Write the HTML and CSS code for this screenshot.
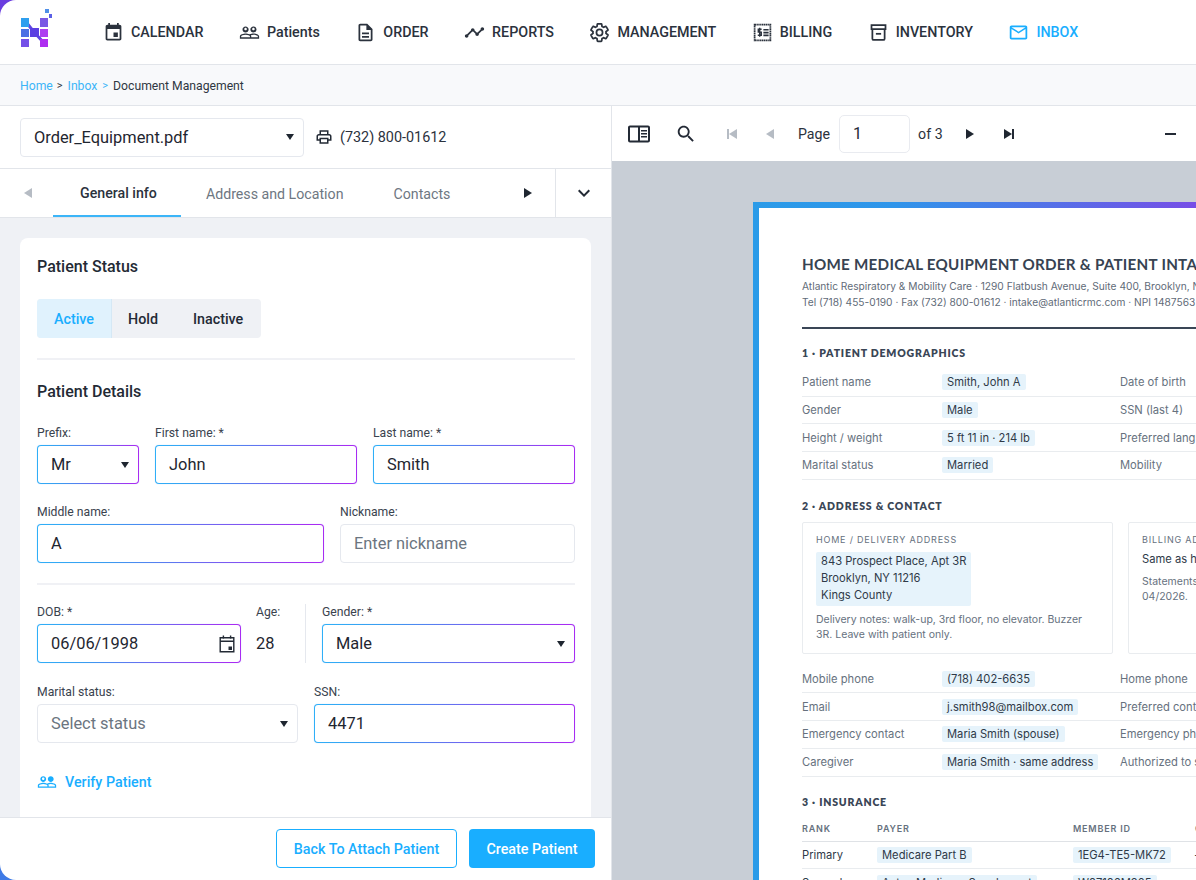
FILE: index.html
```html
<!DOCTYPE html>
<html lang="en">
<head>
    <meta charset="UTF-8">
    <meta name="viewport" content="width=device-width, initial-scale=1.0">
    <title>Document Management</title>
    <link rel="stylesheet" href="styles.css">
</head>
<body>
<div class="shell">

    <header class="topbar">
        <svg class="logo" width="33" height="39" viewBox="0 0 33 39">
            <path d="M6 13 L14 23 L24 34" stroke="#5f45e2" stroke-width="3" fill="none"/>
            <rect x="1" y="9" width="8" height="9" fill="#2f9fee"/>
            <rect x="1" y="20" width="8" height="8" fill="#4a6fe4"/>
            <rect x="1" y="30" width="8" height="8" fill="#7450e8"/>
            <rect x="10" y="19" width="9" height="9" fill="#5b3fe2"/>
            <rect x="20" y="9" width="8" height="9" fill="#7a58e4"/>
            <rect x="20" y="20" width="8" height="8" fill="#ad3ff0"/>
            <rect x="20" y="30" width="8" height="8" fill="#ae2df0"/>
            <rect x="25" y="0" width="4" height="4" fill="#4f8fe8"/>
            <rect x="29" y="5" width="3" height="4" fill="#5a60e6"/>
        </svg>
        <nav class="mainnav">
            <a class="navitem">
                <svg viewBox="0 0 24 24" width="21" height="21"><path d="M17 12h-5v5h5v-5zM16 1v2H8V1H6v2H5c-1.11 0-1.99.9-1.99 2L3 19c0 1.1.89 2 2 2h14c1.1 0 2-.9 2-2V5c0-1.1-.9-2-2-2h-1V1h-2zm3 18H5V8h14v11z"/></svg>
                CALENDAR
            </a>
            <a class="navitem">
                <svg viewBox="0 0 24 24" width="21" height="21"><path d="M16.5 13c-1.2 0-3.07.34-4.5 1-1.43-.67-3.3-1-4.5-1C5.33 13 1 14.08 1 16.25V19h22v-2.75c0-2.17-4.33-3.25-6.5-3.25zm-4 4.5h-10v-1.25c0-.54 2.56-1.75 5-1.75s5 1.21 5 1.75v1.25zm9 0H14v-1.25c0-.46-.2-.86-.52-1.22.88-.3 1.96-.53 3.02-.53 2.44 0 5 1.21 5 1.75v1.25zM7.5 12c1.93 0 3.5-1.57 3.5-3.5S9.43 5 7.5 5 4 6.57 4 8.5 5.57 12 7.5 12zm0-5.5c.83 0 1.5.67 1.5 1.5s-.67 1.5-1.5 1.5S6 8.83 6 8s.67-1.5 1.5-1.5zm9 5.5c1.93 0 3.5-1.57 3.5-3.5S18.43 5 16.5 5 13 6.57 13 8.5s1.57 3.5 3.5 3.5zm0-5.5c.83 0 1.5.67 1.5 1.5s-.67 1.5-1.5 1.5S15 8.83 15 8s.67-1.5 1.5-1.5z"/></svg>
                Patients
            </a>
            <a class="navitem">
                <svg viewBox="0 0 24 24" width="21" height="21"><path d="M8 16h8v2H8zm0-4h8v2H8zm6-10H6c-1.1 0-2 .9-2 2v16c0 1.1.89 2 1.99 2H18c1.1 0 2-.9 2-2V8l-6-6zm4 18H6V4h7v5h5v11z"/></svg>
                ORDER
            </a>
            <a class="navitem">
                <svg viewBox="0 0 24 24" width="21" height="21"><path d="M23 8c0 1.1-.9 2-2 2-.18 0-.35-.02-.51-.07l-3.56 3.55c.05.16.07.34.07.52 0 1.1-.9 2-2 2s-2-.9-2-2c0-.18.02-.36.07-.52l-2.55-2.55c-.16.05-.34.07-.52.07s-.36-.02-.52-.07l-4.55 4.56c.05.16.07.33.07.51 0 1.1-.9 2-2 2s-2-.9-2-2 .9-2 2-2c.18 0 .35.02.51.07l4.56-4.55C8.02 9.36 8 9.18 8 9c0-1.1.9-2 2-2s2 .9 2 2c0 .18-.02.36-.07.52l2.55 2.55c.16-.05.34-.07.52-.07s.36.02.52.07l3.55-3.56C19.02 8.35 19 8.18 19 8c0-1.1.9-2 2-2s2 .9 2 2z"/></svg>
                REPORTS
            </a>
            <a class="navitem">
                <svg viewBox="0 0 24 24" width="21" height="21"><path fill="none" stroke="currentColor" stroke-width="2" d="M19.43 12.98c.04-.32.07-.64.07-.98s-.03-.66-.07-.98l2.11-1.65c.19-.15.24-.42.12-.64l-2-3.46c-.12-.22-.39-.3-.61-.22l-2.49 1c-.52-.4-1.08-.73-1.69-.98l-.38-2.65C14.46 2.18 14.25 2 14 2h-4c-.25 0-.46.18-.49.42l-.38 2.65c-.61.25-1.17.59-1.69.98l-2.49-1c-.23-.09-.49 0-.61.22l-2 3.46c-.13.22-.07.49.12.64l2.11 1.65c-.04.32-.07.65-.07.98s.03.66.07.98l-2.11 1.65c-.19.15-.24.42-.12.64l2 3.46c.12.22.39.3.61.22l2.49-1c.52.4 1.08.73 1.69.98l.38 2.65c.03.24.24.42.49.42h4c.25 0 .46-.18.49-.42l.38-2.65c.61-.25 1.17-.59 1.69-.98l2.49 1c.23.09.49 0 .61-.22l2-3.46c.12-.22.07-.49-.12-.64l-2.11-1.65zM12 15.5c-1.93 0-3.5-1.57-3.5-3.5s1.57-3.5 3.5-3.5 3.5 1.57 3.5 3.5-1.57 3.5-3.5 3.5z"/></svg>
                MANAGEMENT
            </a>
            <a class="navitem">
                <svg viewBox="0 0 24 24" width="21" height="21"><path fill="none" stroke="currentColor" stroke-width="2" stroke-dasharray="1.6 .5" d="M3 3h18v18H3z"/><path fill="none" stroke="currentColor" stroke-width="1.6" d="M11 8.2H7.2v3.400H10.600v3.600H6.600M8.800 6.600v10.200"/><path d="M13 8h6v1.800h-6zm0 3.200h6V13h-6zm0 3.200h6v1.800h-6z"/></svg>
                BILLING
            </a>
            <a class="navitem">
                <svg viewBox="0 0 24 24" width="21" height="21"><path fill="none" stroke="currentColor" stroke-width="2" d="M4 3.500h16v4.600H4zM5 8.100V19a1.500 1.500 0 0 0 1.500 1.500h11A1.500 1.500 0 0 0 19 19V8.100"/><path d="M9 12.500h6v2H9z"/></svg>
                INVENTORY
            </a>
            <a class="navitem active">
                <svg viewBox="0 0 24 24" width="21" height="21"><path d="M20 4H4c-1.1 0-1.99.9-1.99 2L2 18c0 1.1.9 2 2 2h16c1.1 0 2-.9 2-2V6c0-1.1-.9-2-2-2zm0 14H4V8l8 5 8-5v10zm-8-7L4 6h16l-8 5z"/></svg>
                INBOX
            </a>
        </nav>
    </header>

    <div class="crumbs">
        <a>Home</a><span class="sep">&gt;</span><a>Inbox</a><span class="sep blue">&gt;</span><span>Document Management</span>
    </div>

    <div class="workspace">
        <section class="leftpane">
            <div class="filebar">
                <div class="field filesel">Order_Equipment.pdf<i class="caret"></i></div>
                <svg viewBox="0 0 24 24" width="18" height="18"><path d="M19 8h-1V3H6v5H5c-1.66 0-3 1.34-3 3v6h4v4h12v-4h4v-6c0-1.66-1.34-3-3-3zM8 5h8v3H8V5zm8 12v2H8v-4h8v2zm2-2v-2H6v2H4v-4c0-.55.45-1 1-1h14c.55 0 1 .45 1 1v4h-2z"/></svg>
                <span class="fax">(732) 800-01612</span>
            </div>

            <div class="tabs">
                <i class="tri left muted"></i>
                <a class="tab current">General info</a>
                <a class="tab">Address and Location</a>
                <a class="tab">Contacts</a>
                <i class="tri right"></i>
                <div class="tabmore">
                    <svg viewBox="0 0 24 24" width="24" height="24"><path d="M7.41 8.59 12 13.17l4.59-4.58L18 10l-6 6-6-6z"/></svg>
                </div>
            </div>

            <div class="formscroll">
                <div class="card">
                    <h3>Patient Status</h3>
                    <div class="segment">
                        <span class="seg on">Active</span>
                        <span class="seg">Hold</span>
                        <span class="seg">Inactive</span>
                    </div>
                    <hr class="sep-line">
                    <h3>Patient Details</h3>

                    <div class="row row-name">
                        <label class="group"><span class="lbl">Prefix:</span>
                            <div class="field grad">Mr<i class="caret"></i></div></label>
                        <label class="group"><span class="lbl">First name: *</span>
                            <input class="field grad" value="John"></label>
                        <label class="group"><span class="lbl">Last name: *</span>
                            <input class="field grad" value="Smith"></label>
                    </div>
                    <div class="row row-middle">
                        <label class="group"><span class="lbl">Middle name:</span>
                            <input class="field grad" value="A"></label>
                        <label class="group"><span class="lbl">Nickname:</span>
                            <input class="field" placeholder="Enter nickname"></label>
                    </div>
                    <hr class="sep-line tight">
                    <div class="row row-dob">
                        <label class="group"><span class="lbl">DOB: *</span>
                            <div class="field grad">06/06/1998
                                <svg class="cal" viewBox="0 0 20 20" width="20" height="20"><path fill="none" stroke="currentColor" stroke-width="1.4" d="M3.200 3.700h13.600v14H3.200zM3.200 7.300h13.600"/><path d="M5.700 1.500h1.400v3H5.700zm7.200 0h1.400v3h-1.400zM11.500 12.500h3.500V16h-3.500z"/></svg>
                            </div></label>
                        <div class="group age"><span class="lbl">Age:</span><span class="ageval">28</span></div>
                        <div class="vline"></div>
                        <label class="group"><span class="lbl">Gender: *</span>
                            <div class="field grad">Male<i class="caret"></i></div></label>
                    </div>
                    <div class="row row-half">
                        <label class="group"><span class="lbl">Marital status:</span>
                            <div class="field placeholder">Select status<i class="caret"></i></div></label>
                        <label class="group"><span class="lbl">SSN:</span>
                            <input class="field grad" value="4471"></label>
                    </div>
                    <a class="verify">
                        <svg viewBox="0 0 24 24" width="20" height="20"><path d="M16.5 13c-1.2 0-3.07.34-4.5 1-1.43-.67-3.3-1-4.5-1C5.33 13 1 14.08 1 16.25V19h22v-2.75c0-2.17-4.33-3.25-6.5-3.25zm-4 4.5h-10v-1.25c0-.54 2.56-1.75 5-1.75s5 1.21 5 1.75v1.25zm9 0H14v-1.25c0-.46-.2-.86-.52-1.22.88-.3 1.96-.53 3.02-.53 2.44 0 5 1.21 5 1.75v1.25zM7.5 12c1.93 0 3.5-1.57 3.5-3.5S9.43 5 7.5 5 4 6.57 4 8.5 5.57 12 7.5 12zm0-5.5c.83 0 1.5.67 1.5 1.5s-.67 1.5-1.5 1.5S6 8.83 6 8s.67-1.5 1.5-1.5zm9 5.5c1.93 0 3.5-1.57 3.5-3.5S18.43 5 16.5 5 13 6.57 13 8.5s1.57 3.5 3.5 3.5z"/></svg>
                        Verify Patient
                    </a>
                </div>
            </div>

            <footer class="actions">
                <button class="btn outline">Back To Attach Patient</button>
                <button class="btn primary">Create Patient</button>
            </footer>
        </section>

        <section class="rightpane">
            <div class="pdfbar">
                <svg class="pb-side" viewBox="0 0 24 24" width="24" height="24"><path fill="none" stroke="currentColor" stroke-width="2" d="M3 4.500h18a1 1 0 0 1 1 1v13a1 1 0 0 1-1 1H3a1 1 0 0 1-1-1v-13a1 1 0 0 1 1-1zM12 4.500v15"/><path d="M14 8h6v1.500h-6zm0 3h6v1.500h-6zm0 3h6v1.500h-6z"/></svg>
                <svg class="pb-search" viewBox="0 0 24 24" width="22" height="22"><path d="M15.500 14h-.79l-.28-.27C15.410 12.590 16 11.110 16 9.500 16 5.910 13.090 3 9.500 3S3 5.910 3 9.500 5.910 16 9.500 16c1.610 0 3.090-.59 4.230-1.570l.27.28v.79l5 4.990L20.490 19l-4.990-5zm-6 0C7.010 14 5 11.990 5 9.500S7.010 5 9.500 5 14 7.010 14 9.500 11.990 14 9.500 14z"/></svg>
                <span class="pb-first"><i class="bar muted"></i><i class="tri left muted"></i></span>
                <i class="tri left muted pb-prev"></i>
                <span class="pb-text">Page</span>
                <input class="pagebox" value="1">
                <span class="pb-text">of 3</span>
                <i class="tri right pb-next"></i>
                <span class="pb-last"><i class="tri right"></i><i class="bar"></i></span>
                <i class="pb-minus"></i>
            </div>

            <div class="viewer">
                <article class="doc">
                    <h1>HOME MEDICAL EQUIPMENT ORDER &amp; PATIENT INTAKE</h1>
                    <p class="docsub">Atlantic Respiratory &amp; Mobility Care · 1290 Flatbush Avenue, Suite 400, Brooklyn, NY 11226</p>
                    <p class="docsub">Tel (718) 455-0190 · Fax (732) 800-01612 · intake@atlanticrmc.com · NPI 1487563</p>
                    <hr class="docrule">

                    <h2>1 · PATIENT DEMOGRAPHICS</h2>
                    <div class="kv"><span class="k">Patient name</span><span><b class="pill">Smith, John A</b></span><span class="k">Date of birth</span></div>
                    <div class="kv"><span class="k">Gender</span><span><b class="pill">Male</b></span><span class="k">SSN (last 4)</span></div>
                    <div class="kv"><span class="k">Height / weight</span><span><b class="pill">5 ft 11 in · 214 lb</b></span><span class="k">Preferred language</span></div>
                    <div class="kv"><span class="k">Marital status</span><span><b class="pill">Married</b></span><span class="k">Mobility</span></div>

                    <h2 class="second">2 · ADDRESS &amp; CONTACT</h2>
                    <div class="boxes">
                        <div class="box">
                            <div class="boxhead">HOME / DELIVERY ADDRESS</div>
                            <div class="addr">843 Prospect Place, Apt 3R<br>Brooklyn, NY 11216<br>Kings County</div>
                            <p class="note">Delivery notes: walk-up, 3rd floor, no elevator. Buzzer 3R. Leave with patient only.</p>
                        </div>
                        <div class="box">
                            <div class="boxhead">BILLING ADDRESS</div>
                            <div class="same">Same as home address</div>
                            <p class="note">Statements sent by mail since<br>04/2026.</p>
                        </div>
                    </div>
                    <div class="kv"><span class="k">Mobile phone</span><span><b class="pill">(718) 402-6635</b></span><span class="k">Home phone</span></div>
                    <div class="kv"><span class="k">Email</span><span><b class="pill">j.smith98@mailbox.com</b></span><span class="k">Preferred contact</span></div>
                    <div class="kv"><span class="k">Emergency contact</span><span><b class="pill">Maria Smith (spouse)</b></span><span class="k">Emergency phone</span></div>
                    <div class="kv"><span class="k">Caregiver</span><span><b class="pill">Maria Smith · same address</b></span><span class="k">Authorized to sign</span></div>

                    <h2 class="third">3 · INSURANCE</h2>
                    <div class="ins inshead"><span>RANK</span><span>PAYER</span><span>MEMBER ID</span><span>GROUP</span></div>
                    <div class="ins"><span>Primary</span><span><b class="pill">Medicare Part B</b></span><span><b class="pill">1EG4-TE5-MK72</b></span><span>—</span></div>
                    <div class="ins"><span>Secondary</span><span><b class="pill">Aetna Medicare Supplement</b></span><span><b class="pill">W87186M305</b></span><span>—</span></div>
                </article>
            </div>
        </section>
    </div>
</div>
</body>
</html>
```

FILE: styles.css
```css
* {
    box-sizing: border-box;
}
html, body {
    margin: 0;
    height: 100%;
    overflow: hidden;
}
body {
    font-family: Roboto, 'Liberation Sans', sans-serif;
    color: #1f2630;
    background: linear-gradient(to bottom, #6a3ddf, #3f7be6);
}
.shell {
    height: 880px;
    display: flex;
    flex-direction: column;
    background: #fff;
    border-top-left-radius: 16px;
    border-bottom-left-radius: 16px;
    overflow: hidden;
}

/* top nav */
.topbar {
    height: 65px;
    flex: none;
    display: flex;
    align-items: center;
    padding-left: 20px;
    border-bottom: 1px solid #e2e5ea;
}
.logo {
    flex: none;
    align-self: flex-start;
    margin-top: 9px;
}
.mainnav {
    display: flex;
    align-items: center;
    gap: 35.5px;
    margin-left: 50px;
}
.navitem {
    display: flex;
    align-items: center;
    gap: 7px;
    font-size: 14.3px;
    font-weight: 500;
    color: #2b323d;
    white-space: nowrap;
}
.navitem svg {
    fill: currentColor;
    flex: none;
}
.navitem.active {
    color: #19aeff;
}

.crumbs {
    height: 41px;
    flex: none;
    display: flex;
    align-items: center;
    padding: 1px 0 0 20px;
    font-size: 12.2px;
    color: #2f3742;
    background: #f8f9fb;
    border-bottom: 1px solid #e2e5ea;
}
.crumbs a {
    color: #3cb5f8;
}
.crumbs .sep {
    margin: 0 5px 0 4px;
    font-size: 11px;
}
.crumbs .sep.blue {
    margin: 0 5px;
    color: #3cb5f8;
}

.workspace {
    flex: 1;
    display: flex;
    min-height: 0;
}

/* left pane */
.leftpane {
    width: 612px;
    flex: none;
    display: flex;
    flex-direction: column;
    border-right: 1px solid #e2e5ea;
}
.filebar {
    height: 63px;
    flex: none;
    display: flex;
    align-items: center;
    padding: 0 20px;
    border-bottom: 1px solid #e2e5ea;
}
.filebar svg {
    margin-left: 11px;
    fill: #232a35;
}
.fax {
    margin-left: 7px;
    font-size: 14.4px;
    color: #2b323d;
}
.field {
    display: flex;
    align-items: center;
    position: relative;
    width: 100%;
    height: 39px;
    padding: 0 13px;
    font-family: inherit;
    font-size: 16.4px;
    color: #1f2630;
    background: #fff;
    border: 1px solid #e5e8ee;
    border-radius: 4px;
    outline: none;
}
.field::placeholder {
    color: #6b7580;
    opacity: 1;
}
.field.placeholder {
    color: #6b7580;
}
.field.grad {
    border: 1px solid transparent;
    background: linear-gradient(#fff, #fff) padding-box,
                linear-gradient(95deg, #2fb0f8, #3a9cf0 25%, #a92cf2 95%) border-box;
    box-shadow: 0 0 1px rgba(120, 170, 245, .6);
}
.filesel {
    width: 284px;
}
.caret {
    margin-left: auto;
    margin-right: -4px;
    width: 0;
    height: 0;
    border-left: 4.5px solid transparent;
    border-right: 4.5px solid transparent;
    border-top: 6.5px solid #1f2630;
}
.cal {
    margin-left: auto;
    margin-right: -10px;
    color: #232a35;
    fill: currentColor;
}

.tabs {
    height: 49px;
    flex: none;
    display: flex;
    align-items: stretch;
    padding-left: 24px;
    background: #fff;
    border-bottom: 1px solid #e2e5ea;
}
.tri {
    display: inline-block;
    align-self: center;
    flex: none;
    width: 0;
    height: 0;
    border-top: 5px solid transparent;
    border-bottom: 5px solid transparent;
}
.tri.right {
    border-left: 8px solid #1f2630;
}
.tri.left {
    border-right: 8px solid #1f2630;
}
.tri.left.muted {
    border-right-color: #b6bcc4;
}
.tab {
    display: flex;
    align-items: center;
    padding: 1px 25px 0 25px;
    font-size: 14.2px;
    color: #6e7782;
    white-space: nowrap;
}
.tabs .tab:first-of-type {
    margin-left: 21px;
    padding: 1px 24px 0 27px;
}
.tab.current {
    color: #2b323d;
    font-weight: 500;
    border-bottom: 2px solid #3cb5f8;
}
.tabs .tri.right {
    margin-left: 49px;
}
.tabmore {
    margin-left: auto;
    width: 56px;
    display: flex;
    align-items: center;
    justify-content: center;
    border-left: 1px solid #e2e5ea;
}
.tabmore svg {
    fill: #232a35;
}

.formscroll {
    flex: 1;
    min-height: 0;
    overflow: hidden;
    padding: 20px 20px 0;
    background: #eff1f5;
}
.card {
    height: 100%;
    padding: 19px 16px 0 17px;
    background: #fff;
    border-radius: 8px 8px 0 0;
}
.card h3 {
    margin: 0;
    font-size: 16px;
    line-height: 19px;
    font-weight: 500;
    color: #232a35;
}
.segment {
    display: inline-flex;
    height: 39px;
    margin-top: 23px;
    background: #eff1f5;
    border-radius: 4px;
    overflow: hidden;
    font-size: 14.3px;
    font-weight: 500;
    vertical-align: top;
}
.seg {
    display: flex;
    align-items: center;
    padding: 1px 18px 0 16px;
    color: #232a35;
}
.seg:last-child {
    padding: 1px 18px 0 17px;
}
.seg.on {
    padding: 1px 17px 0 17px;
    color: #19aeff;
    background: #e0f2fd;
    border-right: 1px solid #d5e8f5;
}
.sep-line {
    height: 2px;
    margin: 20px 0 22px;
    border: none;
    background: #f0f1f5;
}
.sep-line.tight {
    margin: 20px 0 19px;
}
.row {
    display: grid;
    gap: 16px;
    margin-top: 20px;
}
.card h3 + .row {
    margin-top: 24px;
}
.sep-line + .row {
    margin-top: 0;
}
.row-name {
    grid-template-columns: 102px 1fr 1fr;
}
.row-middle {
    grid-template-columns: 287px 1fr;
}
.row-half {
    grid-template-columns: 1fr 1fr;
    margin-top: 21px;
}
.row-dob {
    display: flex;
    gap: 0;
}
.row-dob .group:first-child {
    width: 204px;
}
.row-dob .group:last-child {
    flex: 1;
}
.group {
    display: block;
    min-width: 0;
}
.lbl {
    display: block;
    height: 20px;
    line-height: 16px;
    font-size: 12.2px;
    color: #3a434e;
}
.age {
    width: 64px;
    padding-left: 15px;
}
.ageval {
    display: block;
    line-height: 39px;
    font-size: 16.4px;
}
.vline {
    width: 1px;
    background: #e5e8ee;
    margin-right: 16px;
}
.verify {
    display: inline-flex;
    align-items: center;
    gap: 8px;
    margin-top: 29px;
    font-size: 14.3px;
    font-weight: 500;
    color: #19aeff;
}
.verify svg {
    fill: currentColor;
}

.actions {
    height: 63px;
    flex: none;
    display: flex;
    align-items: center;
    justify-content: flex-end;
    gap: 12px;
    padding: 0 16px 2px 0;
    border-top: 1px solid #e2e5ea;
}
.btn {
    height: 39px;
    padding: 1px 0 0;
    border-radius: 4px;
    font-family: inherit;
    font-size: 14.3px;
    font-weight: 500;
}
.btn.outline {
    width: 181px;
    color: #19aeff;
    background: #fff;
    border: 1px solid #19aeff;
}
.btn.primary {
    width: 126px;
    color: #fff;
    background: #19aeff;
    border: none;
}

/* right pane */
.rightpane {
    flex: 1;
    min-width: 0;
    display: flex;
    flex-direction: column;
}
.pdfbar {
    height: 55px;
    flex: none;
    display: flex;
    align-items: center;
    padding-left: 15px;
    color: #232a35;
}
.pdfbar svg {
    fill: currentColor;
    flex: none;
}
.pb-search {
    margin-left: 24px;
}
.pb-first, .pb-last {
    display: flex;
    align-items: center;
    gap: 0;
}
.pb-first {
    margin-left: 30px;
}
.bar {
    width: 2px;
    height: 10px;
    background: #232a35;
}
.bar.muted {
    background: #b6bcc4;
}
.pb-prev {
    margin-left: 29px;
}
.pb-text {
    font-size: 14.2px;
    color: #2b323d;
}
.pb-prev + .pb-text {
    margin-left: 24px;
}
.pagebox {
    width: 71px;
    height: 38px;
    margin: 0 8px 0 9px;
    padding: 0 13px;
    font-family: inherit;
    font-size: 16px;
    color: #232a35;
    border: 1px solid #e9ebf0;
    border-radius: 5px;
    outline: none;
}
.pb-next {
    margin-left: 23px;
}
.pb-last {
    margin-left: 30px;
}
.pb-minus {
    width: 11px;
    height: 2px;
    margin-left: 151px;
    background: #232a35;
}
.viewer {
    flex: 1;
    min-height: 0;
    overflow: hidden;
    padding: 41px 0 0 141px;
    background: #c8ced6;
}

/* pdf page */
.doc {
    width: 700px;
    height: 900px;
    padding: 46px 0 0 43px;
    font-family: Inter, 'Liberation Sans', sans-serif;
    color: #2f3a48;
    border: solid transparent;
    border-width: 6px 0 0 6px;
    background: linear-gradient(#fff, #fff) padding-box,
                linear-gradient(90deg, #2b9be8, #2f95ea 20%, #7a4be6 65%, #a83cf0) border-box;
}
.doc h1 {
    margin: 0;
    font-family: Lato, sans-serif;
    font-size: 15.2px;
    line-height: 20px;
    font-weight: 700;
    letter-spacing: .25px;
    color: #374352;
    white-space: nowrap;
}
.docsub {
    margin: 0;
    font-size: 10.2px;
    line-height: 15.5px;
    color: #5f6b78;
    white-space: nowrap;
}
.docsub:first-of-type {
    margin-top: 5px;
}
.docrule {
    height: 2px;
    margin: 17px 0 0;
    border: none;
    background: #3a4656;
}
.doc h2 {
    margin: 18px 0 9px;
    font-family: Lato, sans-serif;
    font-size: 10.5px;
    line-height: 13px;
    font-weight: 800;
    letter-spacing: .8px;
    color: #3a4656;
    white-space: nowrap;
}
.doc h2.second {
    margin: 20px 0 9px;
}
.doc h2.third {
    margin: 19px 0 8px;
}
.kv {
    display: grid;
    grid-template-columns: 140px 178px 1fr;
    align-items: center;
    height: 27.7px;
    font-size: 11.2px;
    border-bottom: 1px solid #e9ecef;
    white-space: nowrap;
}
.k {
    color: #66717e;
}
.pill {
    display: inline-block;
    padding: 0 5px;
    line-height: 16px;
    font-weight: 400;
    color: #2f3a48;
    background: #e6f3fb;
    border-radius: 2px;
}
.boxes {
    display: grid;
    grid-template-columns: 311px 311px;
    gap: 15px;
    margin-bottom: 12px;
}
.box {
    height: 132px;
    padding: 11px 13px;
    border: 1px solid #e9ecef;
    border-radius: 2px;
}
.boxhead {
    font-size: 9px;
    line-height: 12px;
    letter-spacing: .8px;
    color: #66717e;
    white-space: nowrap;
}
.addr {
    display: inline-block;
    margin-top: 6px;
    padding: 1px 5px;
    font-size: 11.2px;
    line-height: 17.3px;
    color: #2f3a48;
    background: #e6f3fb;
    border-radius: 2px;
    white-space: nowrap;
}
.same {
    margin-top: 5px;
    font-size: 11.2px;
    line-height: 17px;
}
.note {
    max-width: 275px;
    margin: 6px 0 0;
    font-size: 10.5px;
    line-height: 15.3px;
    color: #66717e;
}
.ins {
    display: grid;
    grid-template-columns: 75px 196px 122px 1fr;
    align-items: center;
    height: 27.7px;
    font-size: 11.2px;
    border-bottom: 1px solid #e9ecef;
    white-space: nowrap;
}
.inshead {
    height: 25px;
    font-size: 9px;
    font-weight: 600;
    letter-spacing: .8px;
    color: #66717e;
    border-bottom-color: #dfe2e6;
}
```
